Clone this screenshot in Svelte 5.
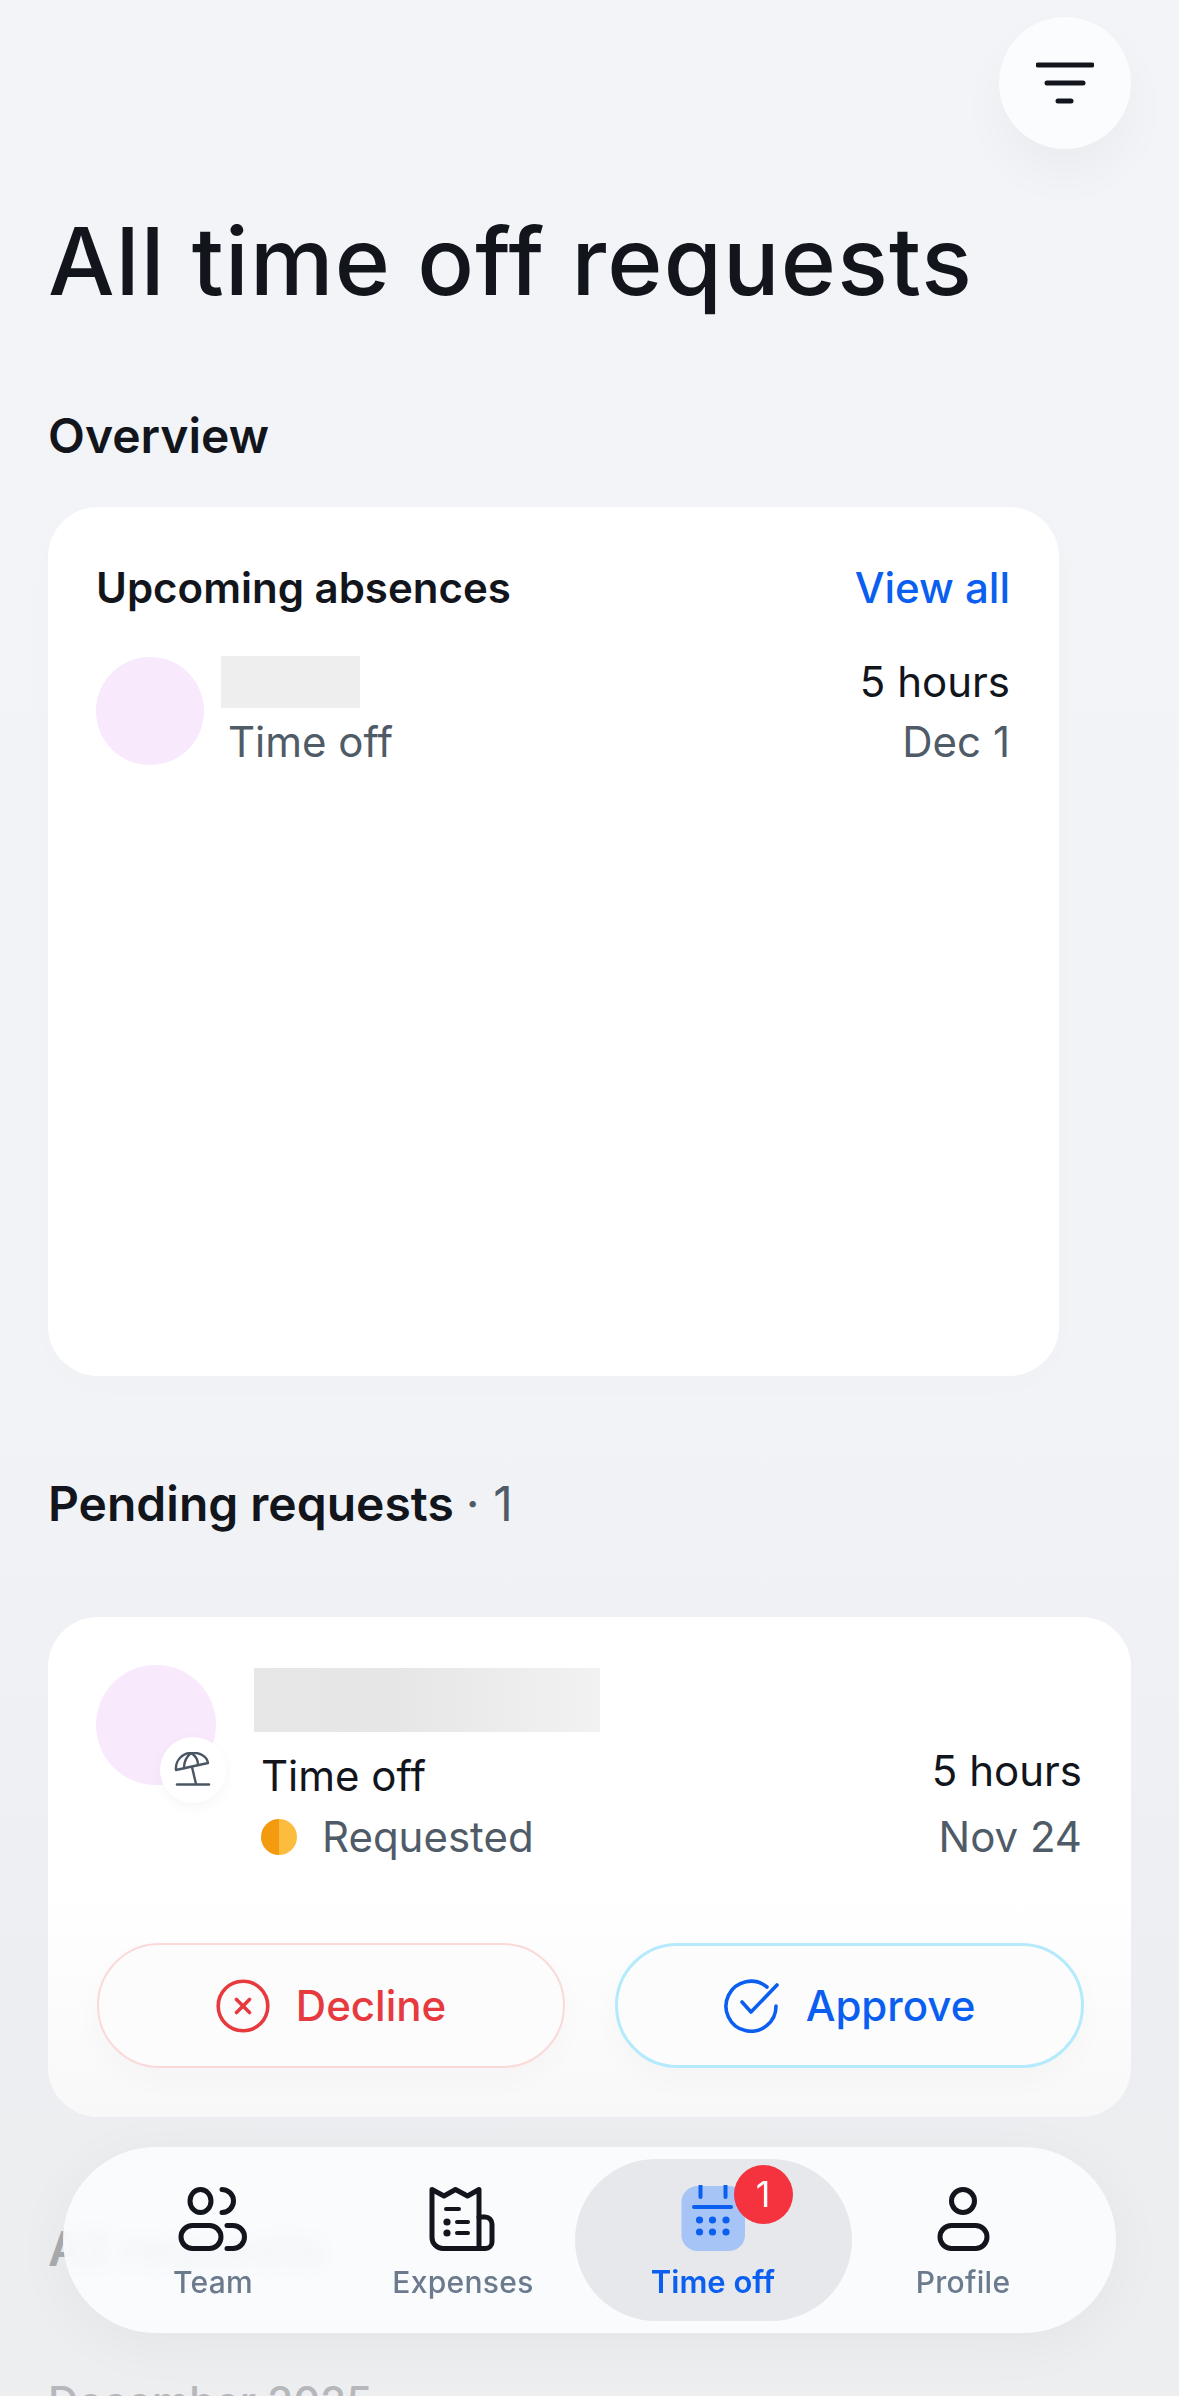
<script>
  const navItems = [
    { id: "team", label: "Team" },
    { id: "expenses", label: "Expenses" },
    { id: "timeoff", label: "Time off", active: true, badge: 1 },
    { id: "profile", label: "Profile" },
  ];
</script>

<div class="page">
  <div class="top">
    <button class="filter" aria-label="Filter">
      <svg width="58" height="42" viewBox="0 0 58 42" fill="none" stroke="#12161c" stroke-width="5" stroke-linecap="round">
        <path d="M2 3H56" /><path d="M11 21H47" /><path d="M22 39H35" />
      </svg>
    </button>
  </div>

  <h1>All time off requests</h1>

  <h2 class="overview">Overview</h2>

  <section class="card upcoming">
    <header>
      <h3>Upcoming absences</h3>
      <span class="link">View all</span>
    </header>
    <div class="row">
      <div class="avatar small"></div>
      <div class="who">
        <div class="redacted short"></div>
        <p class="muted">Time off</p>
      </div>
      <div class="right">
        <p>5 hours</p>
        <p class="muted">Dec 1</p>
      </div>
    </div>
  </section>

  <h2 class="pending">Pending requests <span>· 1</span></h2>

  <section class="card request">
    <div class="req-row">
      <div class="avatar-wrap">
        <div class="avatar large"></div>
        <div class="type-badge">
          <svg width="38" height="36" viewBox="0 0 38 36" fill="none" stroke="#4a5664" stroke-width="2.4" stroke-linecap="round" stroke-linejoin="round">
            <path d="M2 18C1 8 9 1 17 1C25 0 33 4 34 11Z" />
            <path d="M17 1C12 5 10 11 10 16" />
            <path d="M17 1C22 4 24 8 24 13" />
            <path d="M18 15L22 32" />
            <path d="M3 32.5H35" />
          </svg>
        </div>
      </div>
      <div class="who wide">
        <div class="redacted long"></div>
        <p class="type">Time off</p>
        <p class="status"><i class="dot"></i><span class="muted">Requested</span></p>
      </div>
      <div class="right req-right">
        <p>5 hours</p>
        <p class="muted">Nov 24</p>
      </div>
    </div>
    <div class="actions">
      <button class="btn decline">
        <svg width="54" height="54" viewBox="0 0 54 54" fill="none" stroke="#e63a3f" stroke-width="3.6" stroke-linecap="round">
          <circle cx="27" cy="27" r="24.8" />
          <path d="M20.5 20.5L33.5 33.5" /><path d="M33.5 20.5L20.5 33.5" />
        </svg>
        Decline
      </button>
      <button class="btn approve">
        <svg width="56" height="54" viewBox="0 0 56 54" fill="none" stroke="#0a5ff0" stroke-width="3.6" stroke-linecap="round" stroke-linejoin="round">
          <path d="M43 8A25 25 0 1 0 52 27" />
          <path d="M18 23L27 33L53 6" />
        </svg>
        Approve
      </button>
    </div>
  </section>

  <h2 class="all">All requests</h2>
  <h4 class="month">December 2025</h4>

  <nav class="tabs">
    {#each navItems as item}
      <div class="tab" class:active={item.active}>
        <svg width="80" height="68" viewBox="0 0 80 68" fill="none" stroke="#12161c" stroke-width="5" stroke-linecap="round" stroke-linejoin="round">
          {#if item.id === "team"}
            <ellipse cx="27.5" cy="16" rx="10.5" ry="11.5" />
            <rect x="8" y="40.5" width="40" height="23" rx="11.5" />
            <path d="M49 4.5A11.5 11.5 0 0 1 49 27.5" />
            <path d="M54 40.5H60A11.5 11.5 0 0 1 60 63.5H54" />
          {:else if item.id === "expenses"}
            <path d="M9 4.5L21 11L32.5 4.5L44.5 11L56 4.5V63.5H20A11 11 0 0 1 9 52.5Z" />
            <path d="M56 32H62A7 7 0 0 1 69 39V57A6.5 6.5 0 0 1 62.5 63.5H56" />
            <g stroke-width="4">
              <path d="M23 24H36" /><path d="M34 37H45" /><path d="M34 48H45" />
            </g>
            <circle cx="24" cy="37" r="3.6" fill="#12161c" stroke="none" />
            <circle cx="24" cy="48" r="3.6" fill="#12161c" stroke="none" />
          {:else if item.id === "timeoff"}
            <rect x="8.5" y="1" width="63.5" height="65" rx="16" fill="#a6c4f5" stroke="none" />
            <g stroke="#0a5ff0" stroke-width="4">
              <path d="M27.5 1V12" /><path d="M52.5 1V12" />
              <path d="M21 22H58" />
            </g>
            <g fill="#0a5ff0" stroke="none">
              <circle cx="26.5" cy="35" r="3.6" /><circle cx="39.5" cy="35" r="3.6" /><circle cx="53" cy="35" r="3.6" />
              <circle cx="26.5" cy="47" r="3.6" /><circle cx="39.5" cy="47" r="3.6" /><circle cx="53" cy="47" r="3.6" />
            </g>
          {:else}
            <ellipse cx="40" cy="16" rx="11.5" ry="11.5" />
            <rect x="17" y="40.5" width="47" height="23" rx="11.5" />
          {/if}
        </svg>
        <span>{item.label}</span>
        {#if item.badge}
          <b class="count">{item.badge}</b>
        {/if}
      </div>
    {/each}
  </nav>
</div>

<style>
  :global(body) {
    margin: 0;
    background: #f2f4f8;
  }

  .page {
    position: relative;
    height: 2396px;
    overflow: hidden;
    padding: 0 48px;
    box-sizing: border-box;
    font-family: Inter, "Liberation Sans", sans-serif;
    color: #12161c;
    background: linear-gradient(180deg, #f2f4f8 0, #f1f3f6 1400px, #eceef1 2000px, #eceef0 2396px);
  }

  p, h1, h2, h3, h4 {
    margin: 0;
  }

  .top {
    display: flex;
    justify-content: flex-end;
    padding-top: 17px;
  }

  .filter {
    width: 132px;
    height: 132px;
    border: 0;
    padding: 0;
    border-radius: 50%;
    background: #fbfcfe;
    box-shadow: 0 24px 50px rgba(0, 0, 0, 0.035);
    display: flex;
    align-items: center;
    justify-content: center;
  }

  h1 {
    margin-top: 57px;
    font-size: 94px;
    line-height: 110px;
    font-weight: 500;
    letter-spacing: 1.2px;
    color: #12161c;
  }

  h2 {
    font-size: 48px;
    line-height: 56px;
    font-weight: 600;
  }

  .overview {
    margin-top: 92px;
  }

  .pending {
    margin-top: 100px;
  }

  .pending span {
    font-weight: 400;
    color: #4f5b67;
  }

  .card {
    box-sizing: border-box;
    border-radius: 50px;
    background: #fff;
  }

  .upcoming {
    margin-top: 43px;
    width: 1011px;
    height: 869px;
    padding: 56px 49px 0 48px;
    box-shadow: 0 10px 40px rgba(0, 0, 0, 0.012);
  }

  .upcoming header {
    display: flex;
    justify-content: space-between;
  }

  h3 {
    font-size: 42px;
    line-height: 50px;
    font-weight: 600;
  }

  .link {
    font-size: 42px;
    line-height: 50px;
    font-weight: 500;
    color: #0a5ff0;
  }

  .row {
    margin-top: 44px;
    display: flex;
    align-items: flex-start;
  }

  .avatar {
    border-radius: 50%;
    background: #f8e9fd;
  }

  .avatar.small {
    width: 108px;
    height: 108px;
    margin-right: 17px;
  }

  .who {
    flex: 1;
  }

  .who p {
    margin-left: 7px;
  }

  .redacted {
    background: #eeeeee;
  }

  .redacted.short {
    width: 139px;
    height: 52px;
    margin-top: -1px;
    margin-bottom: 9px;
  }

  .redacted.long {
    width: 346px;
    height: 64px;
    margin-top: 3px;
    margin-bottom: 19px;
    background: linear-gradient(90deg, #e7e7e7, #e6e6e6 40%, #f2f2f2);
  }

  p {
    font-size: 42px;
    line-height: 50px;
  }

  .muted {
    color: #4f5b67;
  }

  .right {
    text-align: right;
  }

  .right p:last-child {
    font-weight: 400;
    margin-top: 10px;
  }

  .right p:first-child {
    font-weight: 435;
  }

  .request {
    margin-top: 85px;
    height: 500px;
    padding: 48px 47px 49px 48px;
    background: linear-gradient(180deg, #fff 55%, #f8f8f8 100%);
  }

  .req-row {
    display: flex;
    align-items: flex-start;
  }

  .avatar-wrap {
    position: relative;
    width: 120px;
    margin-right: 38px;
  }

  .avatar.large {
    width: 120px;
    height: 120px;
  }

  .type-badge {
    position: absolute;
    left: 64px;
    top: 72px;
    width: 66px;
    height: 66px;
    border-radius: 50%;
    background: #fff;
    box-shadow: 0 4px 14px rgba(0, 0, 0, 0.04);
    display: flex;
    align-items: center;
    justify-content: center;
  }

  .type {
    font-weight: 435;
  }

  .status {
    margin-top: 11px;
    display: flex;
    align-items: center;
  }

  .dot {
    width: 36px;
    height: 36px;
    border-radius: 50%;
    margin-right: 25px;
    background: linear-gradient(90deg, #f49a0e 50%, #fcbc3e 50%);
  }

  .req-right {
    margin-top: 81px;
    margin-right: 2px;
  }

  .req-right p:last-child {
    margin-top: 16px;
  }

  .actions {
    margin-top: 81px;
    display: grid;
    grid-template-columns: 468px 469px;
    gap: 50px;
    margin-left: 1px;
  }

  .btn {
    height: 125px;
    border-radius: 63px;
    background: #fcfcfd;
    font-family: inherit;
    font-size: 42px;
    font-weight: 500;
    display: flex;
    align-items: center;
    justify-content: center;
    gap: 26px;
    box-shadow: 0 12px 30px rgba(0, 0, 0, 0.025);
    box-sizing: border-box;
  }

  .decline {
    border: 2px solid #fcd9d9;
    color: #e63a3f;
  }

  .approve {
    border: 3px solid #b5eafd;
    color: #0a5ff0;
  }

  .all {
    margin-top: 104px;
    color: #a9abae;
  }

  .month {
    margin-top: 100px;
    font-size: 42px;
    line-height: 50px;
    font-weight: 500;
    color: #b5b7ba;
  }

  .tabs {
    position: absolute;
    left: 63px;
    top: 2147px;
    width: 1053px;
    height: 186px;
    box-sizing: border-box;
    padding: 12px 25px;
    border-radius: 93px;
    background: rgba(251, 252, 254, 0.9);
    backdrop-filter: blur(7px);
    box-shadow: 0 10px 60px rgba(0, 0, 0, 0.045);
    display: grid;
    grid-template-columns: repeat(4, 250px);
  }

  .tab {
    position: relative;
    height: 162px;
    box-sizing: border-box;
    padding-top: 26px;
    display: flex;
    flex-direction: column;
    align-items: center;
    border-radius: 81px;
    font-size: 30px;
    line-height: 38px;
    font-weight: 500;
    letter-spacing: 0.3px;
    color: #6b7a8c;
  }

  .tab span {
    margin-top: 10px;
  }

  .tab.active {
    margin: 0 -13.5px;
    background: #e6e8eb;
    color: #0a5ff0;
    font-size: 31px;
    font-weight: 600;
    letter-spacing: 0;
  }

  .count {
    position: absolute;
    left: 159px;
    top: 6px;
    width: 59px;
    height: 59px;
    border-radius: 50%;
    background: #f5333f;
    color: #fff;
    font-size: 36px;
    line-height: 59px;
    font-weight: 400;
    letter-spacing: 0;
    text-align: center;
  }
</style>
